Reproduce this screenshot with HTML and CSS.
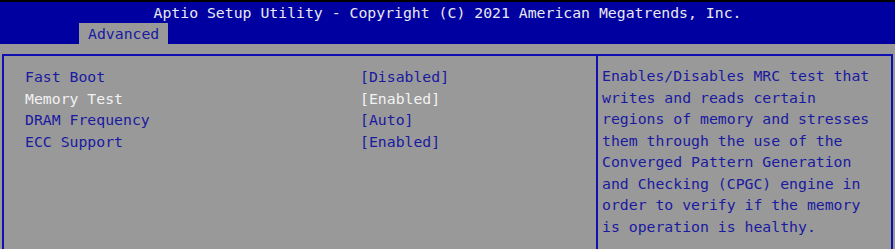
FILE: index.html
```html
<!DOCTYPE html>
<html lang="en">
<head>
  <meta charset="UTF-8">
  <title>Aptio Setup Utility</title>
  <link rel="stylesheet" href="styles.css">
</head>
<body>
  <div class="header">
    <div class="title">Aptio Setup Utility - Copyright (C) 2021 American Megatrends, Inc.</div>
    <div class="tabs">
      <span class="tab">Advanced</span>
    </div>
  </div>

  <div class="main">
    <div class="items">
      <div class="row"><span class="name">Fast Boot</span><span class="value">[Disabled]</span></div>
      <div class="row selected"><span class="name">Memory Test</span><span class="value">[Enabled]</span></div>
      <div class="row"><span class="name">DRAM Frequency</span><span class="value">[Auto]</span></div>
      <div class="row"><span class="name">ECC Support</span><span class="value">[Enabled]</span></div>
    </div>
    <div class="help">
      Enables/Disables MRC test that<br>
      writes and reads certain<br>
      regions of memory and stresses<br>
      them through the use of the<br>
      Converged Pattern Generation<br>
      and Checking (CPGC) engine in<br>
      order to verify if the memory<br>
      is operation is healthy.
    </div>
  </div>
</body>
</html>
```

FILE: styles.css
```css
body { margin: 0; background: #999999; font-family: "DejaVu Sans Mono", "Liberation Mono", monospace; font-size: 14.8px; color: #1a1aa0; height: 249px; overflow: hidden; }
.header { background: #0000a0; border-top: 2px solid #000; height: 42px; display: flex; flex-direction: column; }
.title { color: #e8e8f0; text-align: center; height: 21px; line-height: 22px; }
.tabs { padding-left: 79px; }
.tab { display: inline-block; background: #999999; color: #1a1aa0; padding: 0 9px; height: 21px; line-height: 22px; }
.main { margin: 10px 2px 0 2px; border: 2px solid #1010b0; border-bottom: none; display: flex; height: 200px; }
.items { width: 571px; padding: 10px 0 0 21px; line-height: 21.5px; }
.row { display: flex; }
.name { width: 335px; }
.selected { color: #f2f2f2; }
.help { border-left: 2px solid #1010b0; padding: 9px 0 0 4px; line-height: 21.5px; flex: 1; white-space: nowrap; }
```
